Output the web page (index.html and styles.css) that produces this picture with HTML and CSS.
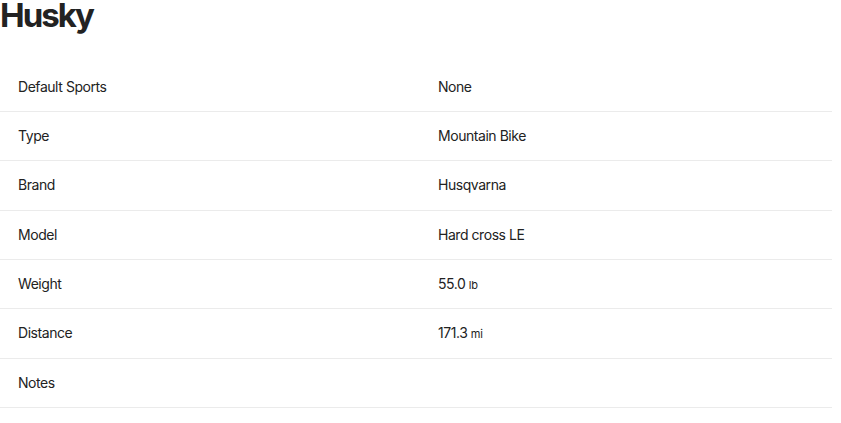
FILE: index.html
```html
<!DOCTYPE html>
<html>
<head>
<meta charset="utf-8">
<link rel="stylesheet" href="styles.css">
</head>
<body>
<h1 class="title">Husky</h1>
<div class="table">
  <div class="row"><div class="label">Default Sports</div><div class="value">None</div></div>
  <div class="row"><div class="label">Type</div><div class="value">Mountain Bike</div></div>
  <div class="row"><div class="label">Brand</div><div class="value">Husqvarna</div></div>
  <div class="row"><div class="label">Model</div><div class="value">Hard cross LE</div></div>
  <div class="row"><div class="label">Weight</div><div class="value">55.0 <span class="unit">lb</span></div></div>
  <div class="row"><div class="label">Distance</div><div class="value">171.3 <span class="unit">mi</span></div></div>
  <div class="row"><div class="label">Notes</div><div class="value"></div></div>
</div>
</body>
</html>
```
FILE: styles.css
```css
html, body {
  margin: 0;
  padding: 0;
  background: #fff;
}
body {
  font-family: Inter, "Noto Sans", sans-serif;
  color: #222;
}
.title {
  margin: 0 0 32.67px 0;
  font-size: 33px;
  line-height: 30px;
  font-weight: 700;
  color: #222;
  letter-spacing: -2px;
}
.table {
  width: 832px;
}
.row {
  display: grid;
  grid-template-columns: 420px 1fr;
  border-bottom: 1px solid #ebebeb;
  font-size: 14px;
  line-height: 20px;
  letter-spacing: -0.45px;
}
.label, .value {
  padding: 14.17px 18px;
}
.unit {
  font-size: 11px;
  line-height: 1;
  letter-spacing: -0.2px;
}
```
